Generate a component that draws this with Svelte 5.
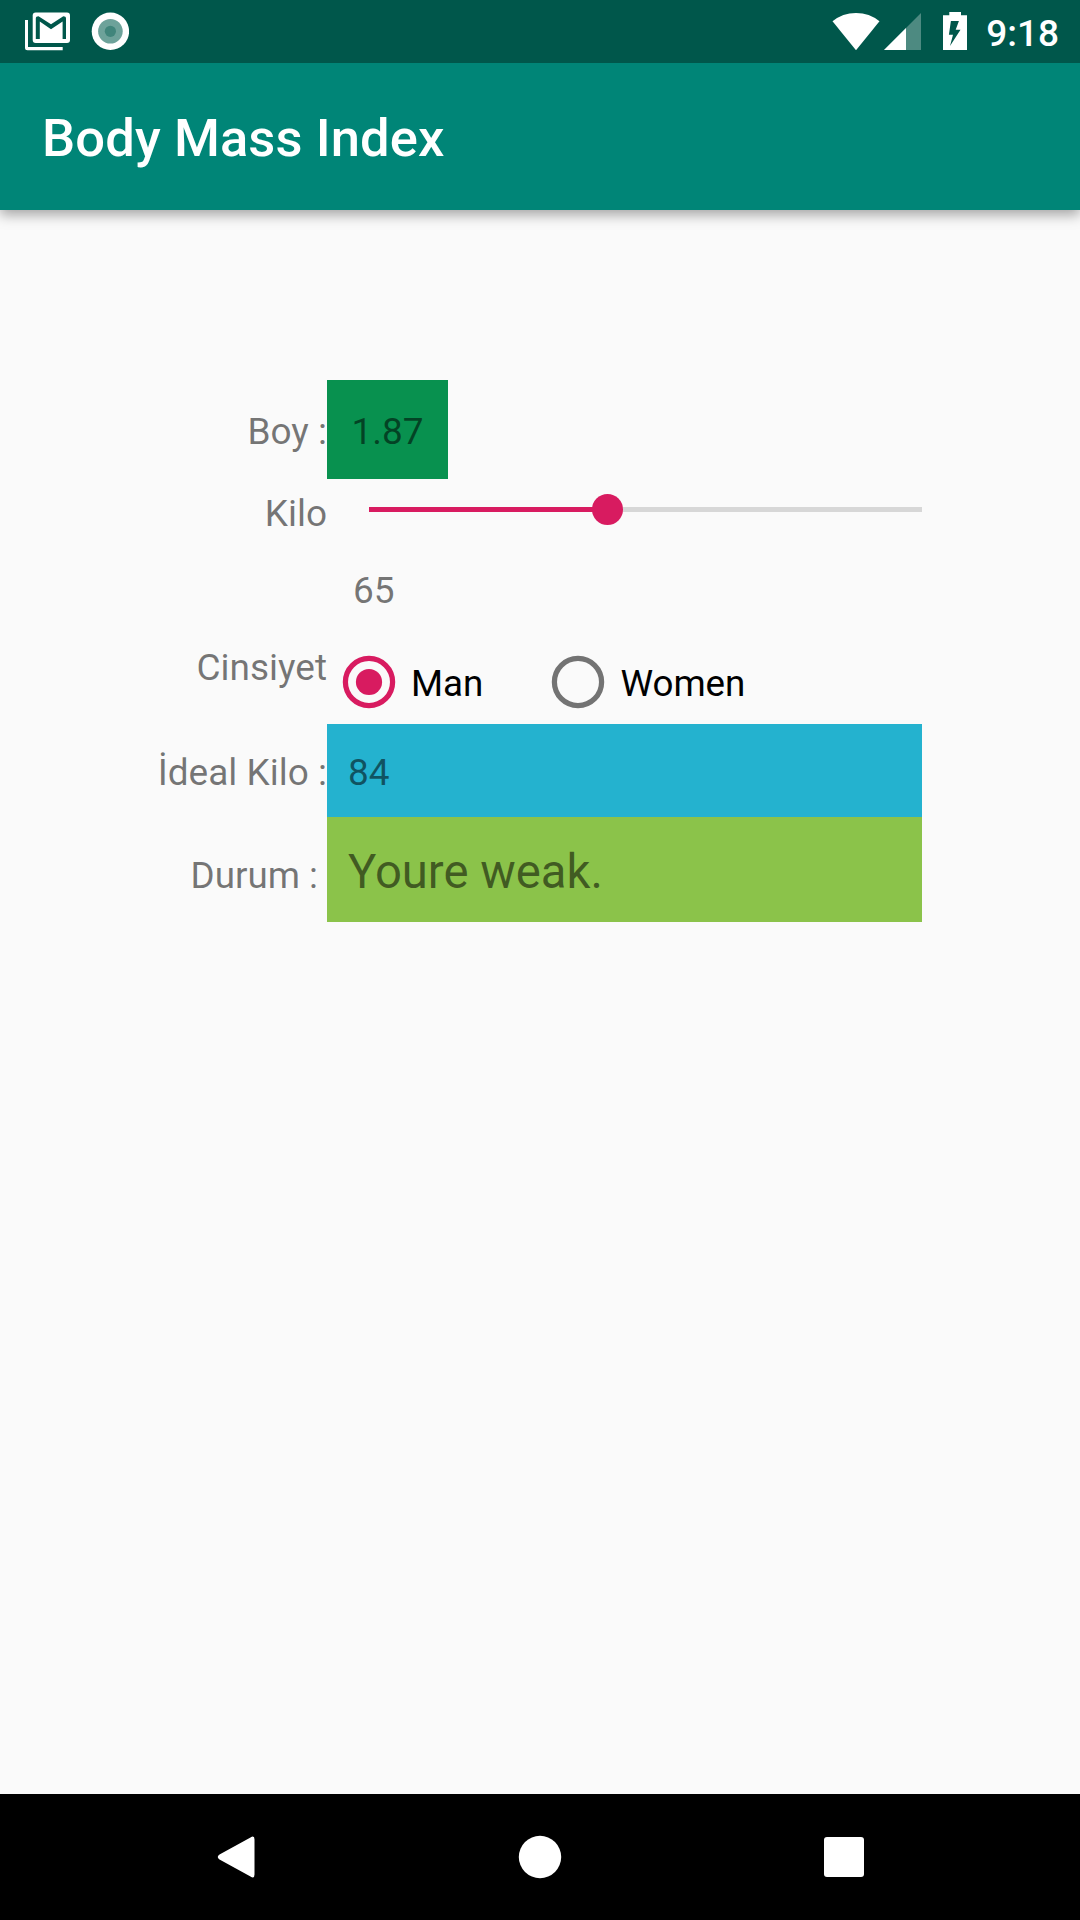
<script>
  let weight = $state(65);
  let gender = $state('Man');
  const progress = 43.1;
  const options = ['Man', 'Women'];
</script>

<div class="screen">
  <header class="status">
    <div class="left">
      <svg width="45" height="39" viewBox="25 12 45 39">
        <path d="M25 20h3v27h34.700v3.300H27.500q-2.500 0-2.500-2.500z" fill="#fff" />
        <rect x="32.700" y="12.500" width="37.300" height="30.500" rx="3" fill="#fff" />
        <path d="M35.800 39V18.500Q35.800 16.200 38.500 16.200L51 24.300L63.300 16.200Q66 16.200 66 18.500V39H62.600V21.500L51 29.300L39.800 21.500V39z" fill="#00574b" />
      </svg>
      <svg width="38" height="38" viewBox="-19.400 -19.300 38 38">
        <circle r="18.700" fill="#fff" />
        <circle r="12.300" fill="#6da29a" />
        <circle r="5.600" fill="#40857b" />
      </svg>
    </div>
    <div class="right">
      <svg width="136" height="40" viewBox="832 12 136 40">
        <path d="M832.500 21.300Q842.500 13 856 13T879.500 21.300L856 50.300z" fill="#fff" />
        <path d="M884 50L921 13V50z" fill="#4d8a81" />
        <path d="M884 50L906 28V50z" fill="#fff" />
        <path d="M949.300 12h11.700v3.300h6v34.700h-24V15.300h6.300z" fill="#fff" />
        <path d="M950.900 21H958.900L955.700 29.700H960.500L950 46L953 34.700H948.900z" fill="#00574b" />
      </svg>
      <span class="clock">9:18</span>
    </div>
  </header>

  <div class="appbar"><h1>Body Mass Index</h1></div>

  <main class="form">
    <div class="label boy">Boy :</div>
    <div class="cell"><span class="height">1.87</span></div>

    <div class="label kilo">Kilo</div>
    <div class="slider">
      <div class="fill" style:width="{progress}%"></div>
      <div class="thumb"></div>
      <div class="rest"></div>
    </div>

    <div></div>
    <div class="weight">{weight}</div>

    <div class="label sex">Cinsiyet</div>
    <div class="radios">
      {#each options as option}
        <button class="radio" onclick={() => (gender = option)}>
          <svg class:on={gender === option} width="84" height="84" viewBox="-42 -42 84 84">
            <circle r="23.600" fill="none" stroke="currentColor" stroke-width="5.250" />
            {#if gender === option}<circle r="13.100" fill="currentColor" />{/if}
          </svg>
          <span>{option}</span>
        </button>
      {/each}
    </div>

    <div class="label ideal">İdeal Kilo :</div>
    <div class="ideal-value">84</div>

    <div class="label state">Durum :{' '}</div>
    <div class="state-value">Youre weak.</div>
  </main>

  <nav class="navbar">
    <svg viewBox="0 0 48 48"><path d="M42.500 6.500V41.500Q42.500 46 38.500 43.500L7.500 26.500Q4 24 7.500 21.500L38.500 4.500Q42.500 2 42.500 6.500z" fill="#fff" /></svg>
    <svg viewBox="0 0 48 48"><circle cx="24" cy="24" r="21.200" fill="#fff" /></svg>
    <svg viewBox="0 0 48 48"><rect x="4" y="4" width="40" height="40" rx="3" fill="#fff" /></svg>
  </nav>
</div>

<style>
  :global(body) { margin: 0; }
  .screen {
    width: 1080px;
    height: 1920px;
    display: flex;
    flex-direction: column;
    background: #fafafa;
    font-family: Roboto, sans-serif;
    font-size: 37px;
    line-height: 43px;
    color: rgba(0, 0, 0, 0.54);
    overflow: hidden;
  }
  svg { display: block; flex: none; }
  .status {
    box-sizing: border-box;
    height: 63px;
    flex: none;
    display: flex;
    justify-content: space-between;
    padding: 12px 21px 0 25px;
    background: #00574b;
    z-index: 1;
  }
  .left { display: flex; gap: 21px; }
  .right { display: flex; gap: 18px; }
  .clock { color: #fff; font-weight: 500; }
  .appbar {
    box-sizing: border-box;
    height: 147px;
    flex: none;
    display: flex;
    align-items: center;
    padding: 2px 0 0 42px;
    background: #008577;
    box-shadow: 0 5px 12px rgba(0, 0, 0, 0.34);
  }
  h1 {
    margin: 0;
    color: #fff;
    font-size: 52.5px;
    line-height: 62px;
    font-weight: 500;
    letter-spacing: 0.12px;
  }
  .form {
    flex: 1;
    display: grid;
    grid-template-columns: 327px 595px;
    grid-template-rows: 99px 78px 83px 84px 93px 105px;
    padding-top: 170px;
  }
  .label { text-align: right; white-space: pre; }
  .boy { padding-top: 30px; }
  .kilo { padding-top: 13px; }
  .sex { padding-top: 6px; }
  .ideal { padding-top: 27px; }
  .state { padding-top: 37px; font-size: 36.75px; }
  .cell { display: flex; }
  .height {
    box-sizing: border-box;
    width: 121px;
    padding-top: 30px;
    text-align: center;
    background: #08914f;
  }
  .slider {
    display: flex;
    align-items: center;
    height: 61px;
    padding-left: 42px;
  }
  .fill { height: 5px; background: #d81b60; }
  .thumb {
    flex: none;
    width: 31px;
    height: 31px;
    margin: 0 -15px;
    border-radius: 50%;
    background: #d81b60;
    z-index: 1;
  }
  .rest { flex: 1; height: 5px; background: #d7d7d7; }
  .weight { padding: 12px 0 0 26px; }
  .radios { display: flex; gap: 53px; }
  .radio {
    display: flex;
    align-items: center;
    padding: 0;
    border: 0;
    background: none;
    font: inherit;
    font-size: 36.75px;
    color: #000;
  }
  .radio svg { color: #737373; }
  .radio svg.on { color: #d81b60; }
  .radio span { padding-top: 3px; }
  .ideal-value {
    padding: 27px 0 0 21px;
    background: #24b2cf;
  }
  .state-value {
    padding: 28px 0 0 21px;
    background: #8bc34a;
    font-size: 47.25px;
    line-height: 55px;
  }
  .navbar {
    box-sizing: border-box;
    height: 126px;
    flex: none;
    display: flex;
    justify-content: space-between;
    align-items: center;
    padding: 0 212px;
    background: #000;
  }
  .navbar svg { width: 48px; height: 48px; }
</style>
